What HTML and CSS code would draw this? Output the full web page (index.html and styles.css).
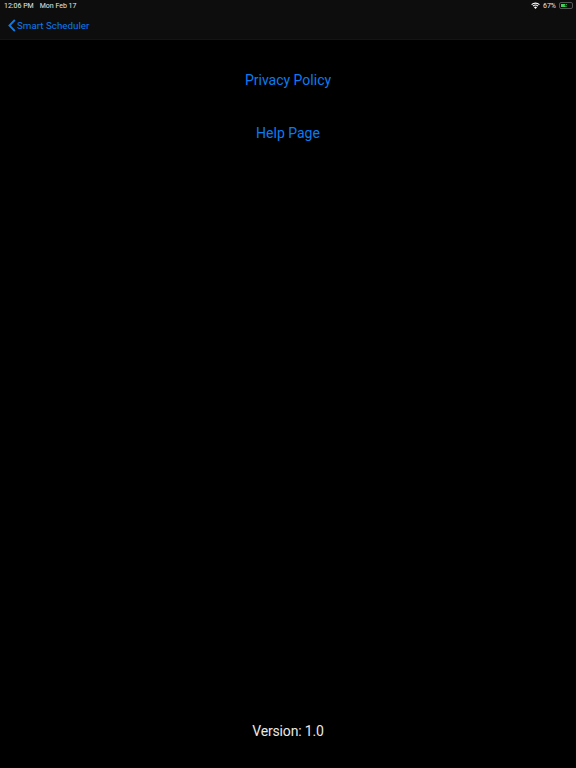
FILE: index.html
```html
<!DOCTYPE html>
<html>
<head>
<meta charset="UTF-8">
<title>Smart Scheduler</title>
<link rel="stylesheet" href="styles.css">
</head>
<body>
	<header class="topbar">
		<div class="status">
			<div class="status-left">
				<span>12:06 PM</span>
				<span>Mon Feb 17</span>
			</div>
			<div class="status-right">
				<svg class="wifi" width="9" height="7" viewBox="0 0 18 14">
					<path d="M9 14 L5.9 10.6 A4.4 4.4 0 0 1 12.1 10.6 Z" fill="#fff"/>
					<path d="M3.9 8.4 A7.4 7.4 0 0 1 14.1 8.4" fill="none" stroke="#fff" stroke-width="2.2"/>
					<path d="M1.2 5.4 A11.2 11.2 0 0 1 16.8 5.4" fill="none" stroke="#fff" stroke-width="2.2"/>
				</svg>
				<span>67%</span>
				<div class="battery">
					<div class="battery-level" style="width:60%"></div>
					<svg class="bolt" width="4" height="5" viewBox="0 0 4 5">
						<path d="M2.4 0 L0.4 2.8 L1.8 2.8 L1.4 5 L3.6 2 L2.2 2 Z" fill="#111"/>
					</svg>
				</div>
			</div>
		</div>
		<nav class="navbar">
			<a class="back" href="#">
				<svg width="8" height="13" viewBox="0 0 8 13">
					<path d="M6.8 1 L1.4 6.5 L6.8 12" fill="none" stroke="#0a7cf0" stroke-width="1.8"/>
				</svg>
				<span>Smart Scheduler</span>
			</a>
		</nav>
	</header>
	<main class="content">
		<div class="links">
			<a href="#">Privacy Policy</a>
			<a href="#">Help Page</a>
		</div>
		<p class="version">Version: 1.0</p>
	</main>
</body>
</html>
```

FILE: styles.css
```css
*{
	margin:0;
	padding:0;
	box-sizing:border-box;
}
html,body{
	height:100%;
}
body{
	display:flex;
	flex-direction:column;
	background:#000;
	font-family:"Roboto","Liberation Sans",sans-serif;
	overflow:hidden;
}
a{
	text-decoration:none;
	color:#0a7cf0;
}
.topbar{
	height:40px;
	background:#0d0d0d;
	border-bottom:1px solid #141414;
}
.status{
	display:flex;
	justify-content:space-between;
	align-items:center;
	height:11px;
	padding:0 3px 0 4px;
	font-size:7px;
	color:#e8e8e8;
}
.status-left{
	display:flex;
	gap:6px;
}
.status-right{
	display:flex;
	align-items:center;
	gap:3px;
}
.battery{
	position:relative;
	width:14px;
	height:7px;
	padding:1px;
	border:1px solid #555;
	border-radius:2px;
}
.battery-level{
	height:100%;
	background:#3fd158;
}
.bolt{
	position:absolute;
	left:4px;
	top:0;
}
.navbar{
	display:flex;
	align-items:center;
	height:28px;
	padding-left:8px;
}
.back{
	display:flex;
	align-items:center;
	gap:1px;
	font-size:9.8px;
}
.content{
	flex:1;
	display:flex;
	flex-direction:column;
	justify-content:space-between;
	align-items:center;
	padding:30px 0 27px;
}
.links{
	display:flex;
	flex-direction:column;
	align-items:center;
	gap:33px;
	font-size:14px;
	line-height:20px;
}
.version{
	font-size:14px;
	letter-spacing:-0.15px;
	line-height:20px;
	color:#e8e8e8;
}
```
